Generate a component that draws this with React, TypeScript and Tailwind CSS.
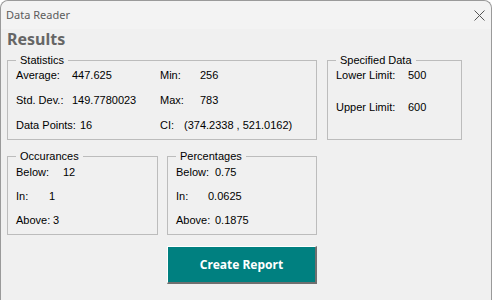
import React from 'react'

interface GroupProps {
  title: string
  className?: string
  children: React.ReactNode
}

function Group({ title, className = '', children }: GroupProps) {
  return (
    <fieldset className={`border border-[#bcbcbc] ${className}`}>
      <legend className="ml-[8px] px-[4px] leading-[14px]">{title}</legend>
      {children}
    </fieldset>
  )
}

function Row({ label, value, labelWidth }: { label: string; value: string; labelWidth: string }) {
  return (
    <div className="flex h-[14px] items-center">
      <span className={`${labelWidth} shrink-0`}>{label}</span>
      <span>{value}</span>
    </div>
  )
}

export default function App() {
  return (
    <div className="w-[492px] h-[300px] overflow-hidden bg-[#f0f0f0] border border-b-0 border-[#9a9a9a] rounded-t-[8px] font-['Liberation_Sans',Arial,sans-serif] text-[11px] text-black">
      {/* title bar */}
      <div className="h-[28px] flex items-center justify-between pl-[5px] pr-[6px] bg-[#f3f3f3] rounded-t-[8px]">
        <span className="font-['Noto_Sans',sans-serif] text-[11px] text-[#5c5c5c]">Data Reader</span>
        <svg width="11" height="11" viewBox="0 0 11 11" className="text-[#555]">
          <path d="M0.5 0.5 L10.5 10.5 M10.5 0.5 L0.5 10.5" stroke="currentColor" strokeWidth="1" fill="none" />
        </svg>
      </div>

      <div className="px-[6px]">
        <h1 className="h-[20px] leading-[20px] font-['Noto_Sans',sans-serif] font-bold text-[16px] text-[#666666]">Results</h1>

        {/* top row */}
        <div className="mt-[4px] flex gap-[10px]">
          <Group title="Statistics" className="w-[310px] h-[87px]">
            <div className="pl-[8px] pt-[1px] flex flex-col gap-[11px]">
              <div className="flex">
                <div className="w-[144px]"><Row label="Average:" value="447.625" labelWidth="w-[56px]" /></div>
                <Row label="Min:" value="256" labelWidth="w-[40px]" />
              </div>
              <div className="flex">
                <div className="w-[144px]"><Row label="Std. Dev.:" value="149.7780023" labelWidth="w-[56px]" /></div>
                <Row label="Max:" value="783" labelWidth="w-[40px]" />
              </div>
              <div className="flex">
                <div className="w-[144px]"><Row label="Data Points:" value="16" labelWidth="w-[64px]" /></div>
                <Row label="CI:" value="(374.2338 , 521.0162)" labelWidth="w-[24px]" />
              </div>
            </div>
          </Group>

          <Group title="Specified Data" className="w-[135px] h-[87px]">
            <div className="pl-[8px] pt-[1px] flex flex-col gap-[18px]">
              <Row label="Lower Limit:" value="500" labelWidth="w-[72px]" />
              <Row label="Upper Limit:" value="600" labelWidth="w-[72px]" />
            </div>
          </Group>
        </div>

        {/* bottom row */}
        <div className="mt-[9px] grid grid-cols-[151px_150px] gap-x-[9px]">
          <Group title="Occurances" className="h-[86px]">
            <div className="pl-[8px] pt-[2px] flex flex-col gap-[10px]">
              <Row label="Below:" value="12" labelWidth="w-[47px]" />
              <Row label="In:" value="1" labelWidth="w-[33px]" />
              <Row label="Above:" value="3" labelWidth="w-[37px]" />
            </div>
          </Group>

          <Group title="Percentages" className="h-[86px]">
            <div className="pl-[8px] pt-[2px] flex flex-col gap-[10px]">
              <Row label="Below:" value="0.75" labelWidth="w-[39px]" />
              <Row label="In:" value="0.0625" labelWidth="w-[32px]" />
              <Row label="Above:" value="0.1875" labelWidth="w-[39px]" />
            </div>
          </Group>

          <button className="col-start-2 mt-[11px] h-[38px] w-[150px] bg-[#008080] border-t border-l border-white border-r-2 border-b-2 border-r-[#6f6f6f] border-b-[#6f6f6f] font-['Noto_Sans',sans-serif] font-bold text-[12px] text-white">
            Create Report
          </button>
        </div>
      </div>
    </div>
  )
}
